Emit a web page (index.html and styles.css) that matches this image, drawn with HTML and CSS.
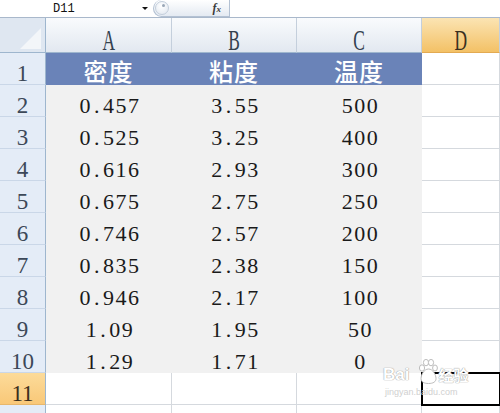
FILE: index.html
```html
<!DOCTYPE html>
<html>
<head>
<meta charset="utf-8">
<link rel="stylesheet" href="styles.css">
</head>
<body>
<div class="app">
  <div class="fbar">
    <div class="namebox">D11</div>
    <div class="arrow"></div>
    <div class="pill"><span class="knob"><span class="knob-dot"></span></span><span class="fx">f<span class="fx-x">x</span></span></div>
  </div>
  <div class="sheet">
    <div class="corner"></div>
    <div class="ch"><span>A</span></div>
    <div class="ch"><span>B</span></div>
    <div class="ch"><span>C</span></div>
    <div class="ch sel"><span>D</span></div>

    <div class="rh">1</div>
    <div class="hd">密度</div>
    <div class="hd">粘度</div>
    <div class="hd">温度</div>
    <div class="wc"></div>

    <div class="rh">2</div>
    <div class="dt">0<span class="dot">.</span>457</div>
    <div class="dt">3<span class="dot">.</span>55</div>
    <div class="dt">500</div>
    <div class="wc"></div>

    <div class="rh">3</div>
    <div class="dt">0<span class="dot">.</span>525</div>
    <div class="dt">3<span class="dot">.</span>25</div>
    <div class="dt">400</div>
    <div class="wc"></div>

    <div class="rh">4</div>
    <div class="dt">0<span class="dot">.</span>616</div>
    <div class="dt">2<span class="dot">.</span>93</div>
    <div class="dt">300</div>
    <div class="wc"></div>

    <div class="rh">5</div>
    <div class="dt">0<span class="dot">.</span>675</div>
    <div class="dt">2<span class="dot">.</span>75</div>
    <div class="dt">250</div>
    <div class="wc"></div>

    <div class="rh">6</div>
    <div class="dt">0<span class="dot">.</span>746</div>
    <div class="dt">2<span class="dot">.</span>57</div>
    <div class="dt">200</div>
    <div class="wc"></div>

    <div class="rh">7</div>
    <div class="dt">0<span class="dot">.</span>835</div>
    <div class="dt">2<span class="dot">.</span>38</div>
    <div class="dt">150</div>
    <div class="wc"></div>

    <div class="rh">8</div>
    <div class="dt">0<span class="dot">.</span>946</div>
    <div class="dt">2<span class="dot">.</span>17</div>
    <div class="dt">100</div>
    <div class="wc"></div>

    <div class="rh">9</div>
    <div class="dt">1<span class="dot">.</span>09</div>
    <div class="dt">1<span class="dot">.</span>95</div>
    <div class="dt">50</div>
    <div class="wc"></div>

    <div class="rh">10</div>
    <div class="dt">1<span class="dot">.</span>29</div>
    <div class="dt">1<span class="dot">.</span>71</div>
    <div class="dt">0</div>
    <div class="wc"></div>

    <div class="rh sel">11</div>
    <div class="wc"></div>
    <div class="wc"></div>
    <div class="wc"></div>
    <div class="wc active"></div>

    <div class="rh"></div>
    <div class="wc"></div>
    <div class="wc"></div>
    <div class="wc"></div>
    <div class="wc"></div>
  </div>
  <div class="wm">
    <div class="wm-line"><span class="wm-bai">Bai</span><svg class="wm-paw" width="20" height="26" viewBox="0 0 20 26"><ellipse cx="4" cy="9" rx="2.6" ry="3.2"/><ellipse cx="8" cy="3.6" rx="2.6" ry="3.2"/><ellipse cx="13" cy="3.6" rx="2.6" ry="3.2"/><ellipse cx="17" cy="9" rx="2.4" ry="3"/><path d="M10.5 10 C6 10 3 16 3 19.5 C3 23 6 24.5 10.5 24.5 C15 24.5 18 23 18 19.5 C18 16 15 10 10.5 10 Z"/></svg><span class="wm-cn">经验</span></div>
    <div class="wm-url">jingyan.baidu.com</div>
  </div>
</div>
</body>
</html>
```

FILE: styles.css
```css
body {
  margin: 0;
  background: #ffffff;
  font-family: "Liberation Serif", "Times New Roman", serif;
}

.app {
  width: 500px;
  height: 413px;
  overflow: hidden;
  position: relative;
  background: #ffffff;
}

/* formula bar */
.fbar {
  height: 17px;
  display: flex;
  align-items: flex-start;
}

.namebox {
  width: 142px;
  box-sizing: border-box;
  padding-left: 53px;
  font: 12px/18px "Liberation Mono", monospace;
  color: #111111;
}

.arrow {
  width: 0;
  height: 0;
  margin-top: 7px;
  border-left: 3px solid transparent;
  border-right: 3px solid transparent;
  border-top: 3px solid #111111;
}

.pill {
  margin-left: 5px;
  width: 77px;
  height: 17px;
  box-sizing: border-box;
  border: 1px solid #b3c1d3;
  border-top: 0;
  border-radius: 9px 0 0 9px;
  background: linear-gradient(#ffffff, #e4eaf2);
  display: flex;
  align-items: center;
}

.knob {
  width: 12px;
  height: 12px;
  margin-left: 1px;
  border-radius: 50%;
  border: 1px solid #c3cedb;
  background: radial-gradient(circle at 45% 35%, #ffffff, #dfe6ef);
  display: flex;
  align-items: flex-start;
  justify-content: center;
}

.knob-dot {
  width: 3px;
  height: 3px;
  margin-top: 2px;
  margin-left: 2px;
  border-radius: 50%;
  background: #9aa7b7;
}

.fx {
  margin-left: auto;
  margin-right: 8px;
  font: italic bold 12px "Liberation Serif", serif;
  color: #3a3a3a;
}

.fx-x {
  font-size: 9px;
}

/* sheet grid */
.sheet {
  display: grid;
  grid-template-columns: 46px 126px 125px 125px 78px;
  grid-template-rows: 35px;
  grid-auto-rows: 32px;
  border-top: 1px solid #a9b8cb;
}

.sheet > div {
  box-sizing: border-box;
}

.corner {
  background: #dfe7f1;
  border-right: 1px solid #9eb6ce;
  border-bottom: 1px solid #9eb6ce;
  position: relative;
}

.corner::after {
  content: "";
  position: absolute;
  right: 4px;
  bottom: 3px;
  width: 21px;
  height: 21px;
  background: #f3f6f9;
  clip-path: polygon(100% 0, 100% 100%, 0 100%);
}

.ch {
  background: linear-gradient(#f9fbfd, #e2e8f0);
  border-right: 1px solid #c4cfdc;
  border-bottom: 1px solid #9eb6ce;
  text-align: center;
  color: #34414f;
  padding-top: 11px;
  line-height: 22px;
  font-family: "Liberation Serif", "Times New Roman", serif;
}

.ch span {
  display: inline-block;
  font-size: 30px;
  line-height: 22px;
  transform: scaleX(0.58);
}

.ch.sel {
  background: linear-gradient(#fbe4b3, #f3c166);
  border-bottom-color: #e3aa52;
  color: #3a3020;
}

.rh {
  background: #e4ecf7;
  border-right: 1px solid #9eb6ce;
  border-bottom: 1px solid #cad7e8;
  text-align: center;
  font-family: "Liberation Serif", "Times New Roman", serif;
  font-size: 23px;
  line-height: 23px;
  padding-top: 9px;
  color: #3c4858;
}

.rh.sel {
  background: linear-gradient(#fcdb9a, #f9c878);
  border-bottom-color: #e7b76c;
  color: #3b2f1c;
}

.hd {
  background: #6a83b8;
  border-right: 1px solid #6a83b8;
  border-bottom: 1px solid #6a83b8;
  color: #ffffff;
  text-align: center;
  font-family: "Noto Sans CJK SC", sans-serif;
  font-weight: 500;
  font-size: 24px;
  line-height: 24px;
  letter-spacing: 1px;
  padding-top: 6px;
}

.dt {
  background: #f1f1f1;
  text-align: center;
  font-family: "Liberation Serif", "Times New Roman", serif;
  font-size: 22px;
  line-height: 22px;
  padding-top: 10px;
  padding-left: 2px;
  letter-spacing: 1.5px;
  color: #1a1a1a;
}

.dot {
  display: inline-block;
  width: 11px;
  text-align: center;
}

.wc {
  border-right: 1px solid #d5d9de;
  border-bottom: 1px solid #d5d9de;
}

.wc.active {
  outline: 2px solid #000000;
  outline-offset: -1px;
  position: relative;
  z-index: 1;
}

/* watermark */
.wm {
  position: absolute;
  left: 383px;
  top: 357px;
  z-index: 2;
}

.wm-line {
  display: flex;
  align-items: flex-end;
  height: 28px;
}

.wm-bai {
  font: bold 17px/17px "Liberation Sans", sans-serif;
  color: #ffffff;
  text-shadow: 0 0 1px #9a9a9a, 0 0 1px #9a9a9a;
  margin-bottom: 2px;
}

.wm-paw {
  margin-left: 9px;
  fill: #ffffff;
  stroke: #bdbdbd;
  stroke-width: 1;
}

.wm-cn {
  font: bold 15px/15px "Noto Sans CJK SC", sans-serif;
  color: #ffffff;
  text-shadow: 0 0 1px #9a9a9a, 0 0 1px #9a9a9a;
  margin-bottom: 3px;
}

.wm-url {
  font: 9px/10px "Liberation Sans", sans-serif;
  color: #d0d0d0;
  margin-top: 2px;
  padding-left: 2px;
}
```
